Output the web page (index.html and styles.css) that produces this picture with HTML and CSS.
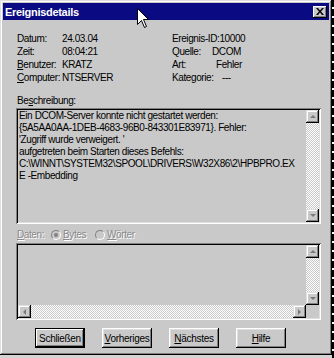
FILE: index.html
```html
<!DOCTYPE html>
<html lang="de">
<head>
    <meta charset="UTF-8">
    <meta name="viewport" content="width=device-width, initial-scale=1.0">
    <title>Ereignisdetails</title>
    <link rel="stylesheet" href="styles.css">
</head>
<body>
    <div class="window">
        <div class="titlebar">
            <span class="title">Ereignisdetails</span>
            <span class="close">
                <svg width="8" height="7" viewBox="0 0 8 7"><path d="M0 0h2l2 2.5L6 0h2L5 3.5 8 7H6L4 4.5 2 7H0l3-3.5z" fill="#000"/></svg>
            </span>
        </div>

        <div class="content">
            <!-- Kopfdaten des Ereignisses -->
            <div class="info">
                <div class="col col-left">
                    <div class="row"><span class="label">Datum:</span><span class="value">24.03.04</span></div>
                    <div class="row"><span class="label">Zeit:</span><span class="value">08:04:21</span></div>
                    <div class="row"><span class="label"><u>B</u>enutzer:</span><span class="value">KRATZ</span></div>
                    <div class="row"><span class="label"><u>C</u>omputer:</span><span class="value">NTSERVER</span></div>
                </div>
                <div class="col col-right">
                    <div class="row"><span>Ereignis-ID:10000</span></div>
                    <div class="row"><span class="label">Quelle:</span><span class="value">DCOM</span></div>
                    <div class="row"><span class="label">Art:</span><span class="value shift-1">Fehler</span></div>
                    <div class="row"><span class="label">Kategorie:</span><span class="value shift-2">---</span></div>
                </div>
            </div>

            <div class="desc-label">Be<u>s</u>chreibung:</div>
            <div class="box box-desc">
                <div class="box-text">Ein DCOM-Server konnte nicht gestartet werden:
{5A5AA0AA-1DEB-4683-96B0-843301E83971}. Fehler:
'Zugriff wurde verweigert. '
aufgetreten beim Starten dieses Befehls:
C:\WINNT\SYSTEM32\SPOOL\DRIVERS\W32X86\2\HPBPRO.EX
E -Embedding</div>
                <div class="vscroll">
                    <span class="sbtn"><i class="arrow up"></i></span>
                    <span class="track"></span>
                    <span class="sbtn"><i class="arrow down"></i></span>
                </div>
            </div>

            <!-- Datenbereich (deaktiviert) -->
            <div class="data-row">
                <span class="disabled data-label"><u>D</u>aten:</span>
                <span class="radio checked"></span><span class="disabled data-opt"><u>B</u>ytes</span>
                <span class="radio"></span><span class="disabled"><u>W</u>örter</span>
            </div>
            <div class="box box-data">
                <div class="data-area"></div>
                <div class="vscroll">
                    <span class="sbtn"><i class="arrow up"></i></span>
                    <span class="track"></span>
                    <span class="sbtn"><i class="arrow down"></i></span>
                </div>
                <div class="hscroll">
                    <span class="sbtn"><i class="arrow left"></i></span>
                    <span class="track"></span>
                    <span class="sbtn"><i class="arrow right"></i></span>
                </div>
                <div class="corner"></div>
            </div>

            <div class="buttons">
                <button class="btn btn-default">Schließen</button>
                <button class="btn"><u>V</u>orheriges</button>
                <button class="btn"><u>N</u>ächstes</button>
                <button class="btn"><u>H</u>ilfe</button>
            </div>
        </div>
    </div>

    <!-- Mauszeiger -->
    <svg class="cursor" width="12" height="20" viewBox="0 0 12 20">
        <path d="M0.5 0.5V16.5L4.5 12.5L7.5 19.5L9.5 18.5L6.5 11.5H11.5Z" fill="#fff" stroke="#000" stroke-width="1"/>
    </svg>
</body>
</html>
```

FILE: styles.css
```css
/* Seite */
body {
    margin: 0;
    width: 334px;
    height: 358px;
    overflow: hidden;
    position: relative;
    font-family: "Liberation Sans", Arial, sans-serif;
    font-size: 10px;
    letter-spacing: -0.4px;
    color: #000;
    background: repeating-linear-gradient(to bottom, #000 0 7px, #fff 7px 9px) right top / 2px 100% no-repeat, #d4d4d4;
}

/* Fenster */
.window {
    width: 332px;
    height: 355px;
    box-sizing: border-box;
    padding: 3px;
    background-color: #c9c9c9;
    box-shadow: inset -1px -1px #000, inset 1px 1px #dfdfdf, inset -2px -2px #808080, inset 2px 2px #fff;
}

/* Titelleiste */
.titlebar {
    height: 17px;
    background-color: #0a0a82;
    display: flex;
    align-items: center;
    justify-content: space-between;
    padding: 0 2px 0 2px;
}

.title {
    color: #fff;
    font-weight: bold;
    font-size: 11px;
    letter-spacing: -0.3px;
}

.close {
    width: 14px;
    height: 12px;
    background-color: #c9c9c9;
    display: flex;
    align-items: center;
    justify-content: center;
    box-shadow: inset -1px -1px #000, inset 1px 1px #fff, inset -2px -2px #808080;
}

/* Inhalt */
.content {
    padding: 0 8px 0 13px;
}

.info {
    display: flex;
    margin-top: 12px;
    padding-left: 1px;
}

.col-left {
    width: 155px;
}

.row {
    display: flex;
    height: 13px;
    line-height: 13px;
}

.col-left .label {
    width: 45px;
}

.col-right .label {
    width: 40px;
}

.shift-1 {
    padding-left: 4px;
}

.shift-2 {
    padding-left: 10px;
}

.desc-label {
    margin-top: 10px;
    padding-left: 1px;
    height: 13px;
    line-height: 13px;
}

/* Vertiefte Felder */
.box {
    margin-top: 1px;
    padding: 2px;
    box-shadow: inset 1px 1px #808080, inset -1px -1px #fff, inset 2px 2px #000, inset -2px -2px #dfdfdf;
}

.box-desc {
    height: 116px;
    box-sizing: border-box;
    display: flex;
}

.box-text {
    flex: 1;
    white-space: pre;
    overflow: hidden;
    line-height: 12px;
    padding-left: 1px;
}

.box-data {
    margin-top: 2px;
    height: 77px;
    box-sizing: border-box;
    display: grid;
    grid-template-columns: 1fr 13px;
    grid-template-rows: 1fr 13px;
}

/* Bildlaufleisten */
.vscroll {
    width: 13px;
    display: flex;
    flex-direction: column;
}

.hscroll {
    display: flex;
}

.track {
    flex: 1;
    background: repeating-conic-gradient(#fff 0 25%, #c9c9c9 0 50%) 0 0 / 2px 2px;
}

.sbtn {
    width: 13px;
    height: 13px;
    flex: none;
    background-color: #c9c9c9;
    box-shadow: inset -1px -1px #000, inset 1px 1px #dfdfdf, inset -2px -2px #808080, inset 2px 2px #fff;
    display: flex;
    align-items: center;
    justify-content: center;
}

.arrow {
    width: 0;
    height: 0;
    border: 3px solid transparent;
}

.arrow.up {
    border-bottom-color: #7a7a7a;
    border-top-width: 0;
}

.arrow.down {
    border-top-color: #7a7a7a;
    border-bottom-width: 0;
}

.arrow.left {
    border-right-color: #7a7a7a;
    border-left-width: 0;
}

.arrow.right {
    border-left-color: #7a7a7a;
    border-right-width: 0;
}

.corner {
    background-color: #c9c9c9;
}

/* Daten-Zeile */
.data-row {
    margin-top: 4px;
    height: 13px;
    line-height: 13px;
    display: flex;
    align-items: center;
    padding-left: 1px;
}

.data-label {
    width: 34px;
}

.data-opt {
    width: 32px;
}

.disabled {
    color: #8a8a8a;
    text-shadow: 1px 1px 0 #fff;
}

.radio {
    width: 10px;
    height: 10px;
    border-radius: 50%;
    margin-right: 2px;
    box-sizing: border-box;
    border: 1px solid #808080;
    border-right-color: #fff;
    border-bottom-color: #fff;
    position: relative;
}

.radio.checked::after {
    content: "";
    position: absolute;
    left: 2px;
    top: 2px;
    width: 4px;
    height: 4px;
    border-radius: 50%;
    background-color: #808080;
}

/* Schaltflächen */
.buttons {
    display: flex;
    gap: 17px;
    margin-top: 8px;
    padding-left: 19px;
}

.btn {
    width: 50px;
    height: 20px;
    padding: 0;
    border: none;
    font-family: inherit;
    font-size: 10px;
    letter-spacing: -0.3px;
    color: #000;
    background-color: #c9c9c9;
    box-shadow: inset -1px -1px #000, inset 1px 1px #fff, inset -2px -2px #808080, inset 2px 2px #dfdfdf;
}

.btn-default {
    box-shadow: inset 0 0 0 1px #000, inset -2px -2px #000, inset 2px 2px #fff, inset -3px -3px #808080;
}

/* Mauszeiger über der Titelleiste */
.cursor {
    position: absolute;
    left: 137px;
    top: 8px;
}
```
